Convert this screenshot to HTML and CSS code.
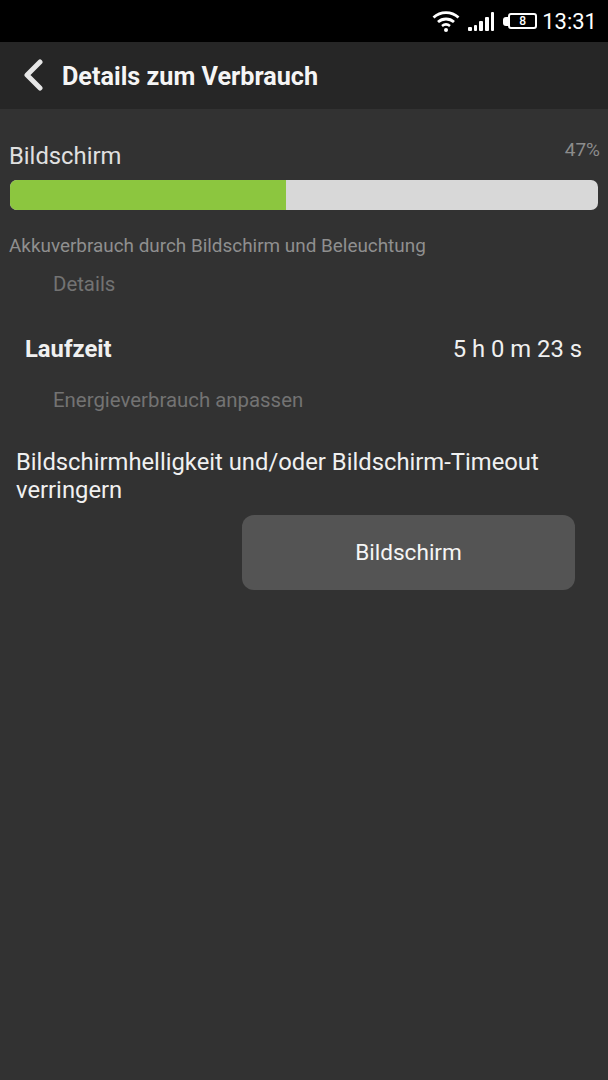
FILE: index.html
```html
<!DOCTYPE html>
<html lang="de">
<head>
    <meta charset="UTF-8">
    <meta name="viewport" content="width=device-width, initial-scale=1.0">
    <title>Details zum Verbrauch</title>
    <link rel="stylesheet" href="styles.css">
</head>
<body>
    <div class="statusbar">
        <svg class="wifi" width="28" height="22" viewBox="0 0 28 22">
            <path d="M1.5 7.5C8.5 1 19.5 1 26.5 7.5" fill="none" stroke="#fff" stroke-width="2.8"/>
            <path d="M6 12C10.5 8 17.5 8 22 12" fill="none" stroke="#fff" stroke-width="2.8"/>
            <path d="M10 16C12.5 14 15.5 14 18 16" fill="none" stroke="#fff" stroke-width="2.6"/>
            <circle cx="14" cy="20" r="2" fill="#fff"/>
        </svg>
        <div class="signal">
            <span class="sig1"></span>
            <span class="sig2"></span>
            <span class="sig3"></span>
            <span class="sig4"></span>
            <span class="sig5"></span>
        </div>
        <div class="battery">
            <div class="battery-tip"></div>
            <div class="battery-body">8</div>
        </div>
        <div class="clock">13:31</div>
    </div>

    <div class="titlebar">
        <svg class="back" width="24" height="32" viewBox="0 0 24 32">
            <path d="M19 3L6 16L19 29" fill="none" stroke="#e6e6e6" stroke-width="5" stroke-linecap="round" stroke-linejoin="round"/>
        </svg>
        <h1>Details zum Verbrauch</h1>
    </div>

    <div class="content">
        <div class="usage-head">
            <div class="usage-name">Bildschirm</div>
            <div class="usage-pct">47%</div>
        </div>
        <div class="bar">
            <div class="bar-fill" style="width: 47%"></div>
        </div>
        <div class="usage-desc">Akkuverbrauch durch Bildschirm und Beleuchtung</div>
        <div class="section-label details-label">Details</div>
        <div class="runtime">
            <div class="runtime-name">Laufzeit</div>
            <div class="runtime-value">5 h 0 m 23 s</div>
        </div>
        <div class="section-label adjust-label">Energieverbrauch anpassen</div>
        <div class="hint">Bildschirmhelligkeit und/oder Bildschirm-Timeout verringern</div>
        <div class="actions">
            <button class="btn">Bildschirm</button>
        </div>
    </div>
</body>
</html>
```

FILE: styles.css
```css
* {
    margin: 0;
    padding: 0;
    box-sizing: border-box;
}

body {
    width: 608px;
    height: 1080px;
    background: #323232;
    font-family: Roboto, "Liberation Sans", sans-serif;
    overflow: hidden;
}

.statusbar {
    height: 42px;
    background: #000;
    display: flex;
    align-items: center;
    justify-content: flex-end;
    padding-right: 11px;
    color: #fff;
}

.wifi {
    margin-right: 8px;
    margin-top: -1px;
}

.signal {
    display: flex;
    align-items: flex-end;
    gap: 2px;
    height: 20px;
    margin-right: 9px;
    margin-top: -1px;
}

.signal span {
    width: 3.6px;
    background: #fff;
    border-radius: 1px;
}

.sig1 { height: 4px; }
.sig2 { height: 6px; }
.sig3 { height: 10px; }
.sig4 { height: 14px; }
.sig5 { height: 19px; }

.battery {
    display: flex;
    align-items: center;
    margin-right: 5px;
}

.battery-tip {
    width: 5px;
    height: 9px;
    background: #fff;
    border-radius: 3px 0 0 3px;
}

.battery-body {
    width: 29px;
    height: 16px;
    border: 2px solid #fff;
    border-radius: 3px;
    font-size: 12px;
    font-weight: 500;
    line-height: 12px;
    text-align: center;
}

.clock {
    font-size: 22px;
}

.titlebar {
    height: 67px;
    background: #262626;
    display: flex;
    align-items: center;
    padding-left: 21px;
}

.back {
    margin-right: 17px;
    margin-top: -1px;
}

.titlebar h1 {
    font-size: 25.2px;
    font-weight: 700;
    color: #f5f5f5;
    margin-top: 2px;
}

.content {
    padding: 0 9px;
}

.usage-head {
    display: flex;
    justify-content: space-between;
    height: 71px;
    padding-top: 32px;
}

.usage-name {
    font-size: 23.8px;
    line-height: 30px;
    color: #e0e0e0;
}

.usage-pct {
    font-size: 19px;
    line-height: 18px;
    color: #8c8c8c;
    margin-right: -1px;
}

.bar {
    width: 588px;
    height: 30px;
    margin-left: 1px;
    background: #d8d8d8;
    border-radius: 7px;
    overflow: hidden;
}

.bar-fill {
    height: 100%;
    background: #8cc63f;
}

.usage-desc {
    margin-top: 25px;
    font-size: 18.9px;
    line-height: 22px;
    color: #8f8f8f;
}

.section-label {
    font-size: 20.4px;
    line-height: 24px;
    color: #737373;
    padding-left: 44px;
}

.details-label {
    margin-top: 15px;
}

.runtime {
    display: flex;
    justify-content: space-between;
    align-items: center;
    padding: 0 17px 0 16px;
    margin-top: 38px;
    height: 30px;
    color: #f0f0f0;
}

.runtime-name {
    font-size: 23.8px;
    font-weight: 700;
}

.runtime-value {
    font-size: 23.8px;
}

.adjust-label {
    margin-top: 24px;
}

.hint {
    margin-top: 36px;
    padding-left: 7px;
    font-size: 23.8px;
    line-height: 28px;
    color: #f0f0f0;
}

.actions {
    display: flex;
    justify-content: flex-end;
    margin-top: 11px;
    padding-right: 24px;
}

.btn {
    width: 333px;
    height: 75px;
    background: #545454;
    border: none;
    border-radius: 12px;
    font-family: inherit;
    font-size: 22.6px;
    color: #f5f5f5;
}
```
